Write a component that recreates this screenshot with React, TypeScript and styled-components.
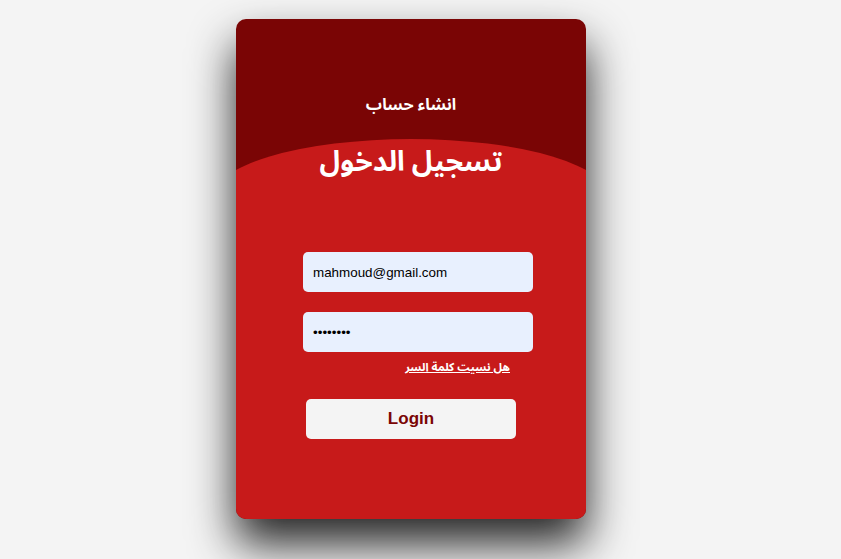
import React from "react";
import styled, { createGlobalStyle } from "styled-components";

const Global = createGlobalStyle`
  html, body { margin: 0; padding: 0; background: #f4f4f4; }
  body { font-family: "Liberation Sans", Arial, "Noto Sans Arabic", sans-serif; }
`;

const arabic = `"Noto Sans Arabic", "Liberation Sans", sans-serif`;

const Page = styled.div`
  width: 841px;
  height: 559px;
  box-sizing: border-box;
  padding: 19px 0 0 236px;
  overflow: hidden;
`;

const Card = styled.div`
  width: 350px;
  height: 500px;
  border-radius: 10px;
  background: #7a0505;
  overflow: hidden;
  display: flex;
  flex-direction: column;
  box-shadow: 0 25px 45px rgba(0, 0, 0, 0.85);
`;

const Header = styled.div`
  height: 120px;
  flex: none;
  display: flex;
  align-items: flex-end;
  justify-content: center;
  padding-bottom: 22px;
  box-sizing: border-box;
`;

const SignupLink = styled.a`
  color: #ffffff;
  font-family: ${arabic};
  font-weight: bold;
  font-size: 16px;
  line-height: 24px;
  text-decoration: none;
  direction: rtl;
`;

const Panel = styled.div`
  flex: 1;
  margin: 0 -25px;
  background: #c71a1a;
  border-radius: 50% 50% 0 0 / 60px 60px 0 0;
  display: flex;
  flex-direction: column;
  align-items: center;
`;

const Title = styled.h1`
  margin: 0;
  color: #ffffff;
  font-family: ${arabic};
  font-size: 28px;
  font-weight: bold;
  direction: rtl;
  line-height: 48px;
`;

const Field = styled.input<{ $top: number }>`
  width: 230px;
  height: 40px;
  box-sizing: border-box;
  border: none;
  border-radius: 5px;
  background: #e8f0fe;
  padding: 0 10px;
  font-family: "Liberation Sans", Arial, sans-serif;
  font-size: 13.4px;
  color: #000;
  outline: none;
  margin-left: 14px;
  margin-top: ${(p) => p.$top}px;
`;

const ForgotRow = styled.div`
  width: 230px;
  margin-left: 14px;
  margin-top: 5px;
  text-align: right;
  padding-right: 23px;
  box-sizing: border-box;
  line-height: 18px;
`;

const Forgot = styled.a`
  color: #ffffff;
  font-family: ${arabic};
  font-size: 11.5px;
  font-weight: bold;
  text-decoration: underline;
  direction: rtl;
`;

const LoginButton = styled.button`
  width: 210px;
  height: 40px;
  margin-top: 23px;
  border: none;
  border-radius: 5px;
  background: #f4f4f4;
  color: #7a0505;
  font-family: "Liberation Sans", Arial, sans-serif;
  font-weight: bold;
  font-size: 17px;
  cursor: pointer;
`;

export default function App() {
  return (
    <>
      <Global />
      <Page>
        <Card>
          <Header>
            <SignupLink href="#">انشاء حساب</SignupLink>
          </Header>
          <Panel>
            <Title>تسجيل الدخول</Title>
            <Field $top={65} type="email" defaultValue="mahmoud@gmail.com" />
            <Field $top={20} type="password" defaultValue="12345678" />
            <ForgotRow>
              <Forgot href="#">هل نسيت كلمة السر</Forgot>
            </ForgotRow>
            <LoginButton>Login</LoginButton>
          </Panel>
        </Card>
      </Page>
    </>
  );
}
